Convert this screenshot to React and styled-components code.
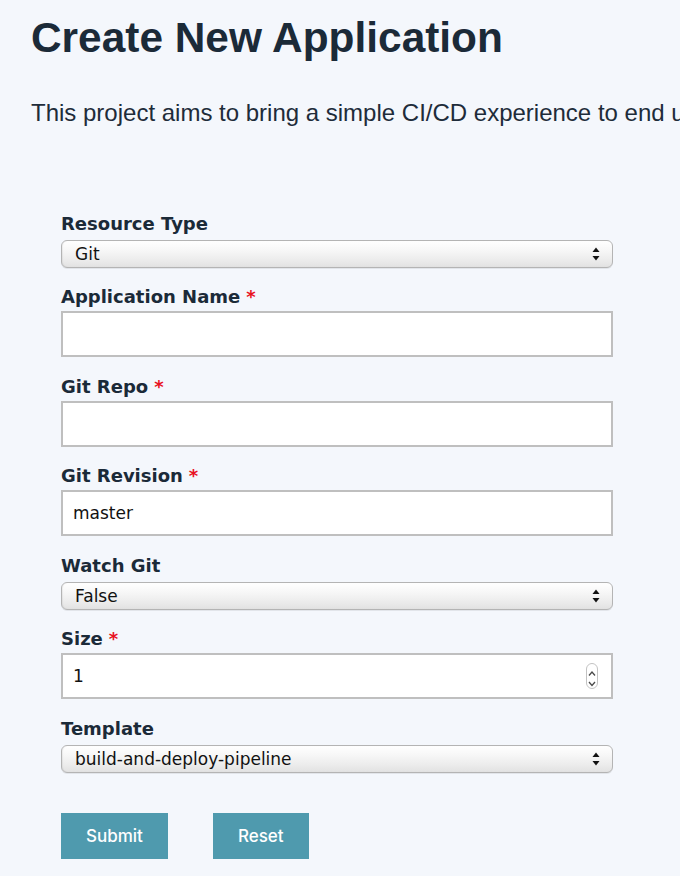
import React from "react";
import styled, { createGlobalStyle } from "styled-components";

const GlobalStyle = createGlobalStyle`
  html, body {
    margin: 0;
    padding: 0;
    background: #f4f7fc;
    overflow: hidden;
  }
  body {
    font-family: "Liberation Sans", Arial, sans-serif;
  }
  * { box-sizing: border-box; }
`;

const Page = styled.main`
  padding: 13.5px 0 0 31px;
  min-height: 876px;
`;

const Title = styled.h1`
  margin: 0;
  font: 700 42.4px/48px "Liberation Sans", Arial, sans-serif;
  color: #1b2a38;
`;

const Intro = styled.p`
  margin: 37px 0 0;
  font: 400 24px/28px "Liberation Sans", Arial, sans-serif;
  color: #1e2c3a;
  white-space: nowrap;
`;

const Form = styled.form`
  margin: 86.3px 0 0 30px;
  width: 552px;
  display: flex;
  flex-direction: column;
`;

const Field = styled.div`
  display: flex;
  flex-direction: column;
  & + & {
    margin-top: 18.5px;
  }
`;

const Label = styled.label`
  font: 700 18px/21px "DejaVu Sans", Verdana, sans-serif;
  color: #1b2a38;
  margin-bottom: 4px;
`;

const Required = styled.span`
  color: #e8111f;
  margin-left: 6px;
`;

const TextInput = styled.input`
  width: 100%;
  height: 46px;
  border: 2px solid #bfbfbf;
  background: #fff;
  padding: 0 10px;
  font: 400 17px "DejaVu Sans", Verdana, sans-serif;
  color: #111;
  outline: none;
`;

const NumberBox = styled.div`
  display: flex;
  align-items: center;
  height: 46px;
  border: 2px solid #bfbfbf;
  background: #fff;
  padding: 0 13px 0 10px;
`;

const BareInput = styled.input`
  flex: 1;
  min-width: 0;
  border: none;
  background: transparent;
  padding: 0;
  font: 400 17px "DejaVu Sans", Verdana, sans-serif;
  color: #111;
  outline: none;
`;

const SelectWrap = styled.div`
  position: relative;
  margin-top: 2px;
  height: 28px;
`;

const Select = styled.select`
  appearance: none;
  -webkit-appearance: none;
  width: 100%;
  height: 28px;
  border: 1px solid #b4b4b4;
  border-radius: 6px;
  background: linear-gradient(to bottom, #ffffff 0%, #f7f7f7 35%, #ebebeb 75%, #e2e2e2 100%);
  box-shadow: inset 1px 0 1px rgba(0, 0, 0, 0.06), 0 1px 0 rgba(0, 0, 0, 0.07);
  padding: 0 30px 0 13px;
  font: 400 17px "DejaVu Sans", Verdana, sans-serif;
  color: #111;
  outline: none;
`;

const Arrows = styled.svg`
  position: absolute;
  right: 13px;
  top: 50%;
  transform: translateY(-50%);
  pointer-events: none;
`;

const ButtonRow = styled.div`
  display: flex;
  gap: 45px;
  margin-top: 40px;
`;

const Button = styled.button`
  height: 46px;
  padding: 0 25px;
  border: none;
  background: #4f9aae;
  color: #fff;
  font: 500 17px "Inter", "Noto Sans", sans-serif;
  cursor: pointer;
`;

const SelectArrows = () => (
  <Arrows width="8" height="14" viewBox="0 0 8 14">
    <path d="M0.5 5 L4 0.5 L7.5 5 Z" fill="#111" />
    <path d="M0.5 9 L7.5 9 L4 13.5 Z" fill="#111" />
  </Arrows>
);

const Spinner = () => (
  <svg width="12" height="26" viewBox="0 0 12 26">
    <rect x="0.5" y="0.5" width="11" height="25" rx="5.5" fill="#fff" stroke="#c2c2c2" />
    <path d="M3 12.5 L6 9 L9 12.5" fill="none" stroke="#4a4a4a" strokeWidth="1.3" />
    <path d="M3 19 L6 22.5 L9 19" fill="none" stroke="#4a4a4a" strokeWidth="1.3" />
  </svg>
);

const SelectField = ({ label, options, value }) => (
  <Field>
    <Label>{label}</Label>
    <SelectWrap>
      <Select defaultValue={value}>
        {options.map((o) => (
          <option key={o} value={o}>
            {o}
          </option>
        ))}
      </Select>
      <SelectArrows />
    </SelectWrap>
  </Field>
);

const InputField = ({ label, value }) => (
  <Field>
    <Label>
      {label}
      <Required>*</Required>
    </Label>
    <TextInput type="text" defaultValue={value} />
  </Field>
);

export default function App() {
  return (
    <>
      <GlobalStyle />
      <Page>
        <Title>Create New Application</Title>
        <Intro>
          This project aims to bring a simple CI/CD experience to end users for their applications.
        </Intro>
        <Form onSubmit={(e) => e.preventDefault()}>
          <SelectField label="Resource Type" options={["Git"]} value="Git" />
          <InputField label="Application Name" value="" />
          <InputField label="Git Repo" value="" />
          <InputField label="Git Revision" value="master" />
          <SelectField label="Watch Git" options={["False", "True"]} value="False" />
          <Field>
            <Label>
              Size
              <Required>*</Required>
            </Label>
            <NumberBox>
              <BareInput type="text" defaultValue="1" />
              <Spinner />
            </NumberBox>
          </Field>
          <SelectField
            label="Template"
            options={["build-and-deploy-pipeline"]}
            value="build-and-deploy-pipeline"
          />
          <ButtonRow>
            <Button type="submit">Submit</Button>
            <Button type="reset">Reset</Button>
          </ButtonRow>
        </Form>
      </Page>
    </>
  );
}
